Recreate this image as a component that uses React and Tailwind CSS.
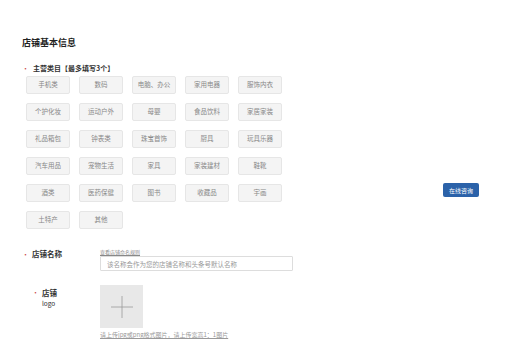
import React from 'react';

const categories = [
  '手机类', '数码', '电脑、办公', '家用电器', '服饰内衣',
  '个护化妆', '运动户外', '母婴', '食品饮料', '家居家装',
  '礼品箱包', '钟表类', '珠宝首饰', '厨具', '玩具乐器',
  '汽车用品', '宠物生活', '家具', '家装建材', '鞋靴',
  '酒类', '医药保健', '图书', '收藏品', '宇画',
  '土特产', '其他',
];

const font = { fontFamily: '"Noto Sans CJK SC", "Noto Sans", sans-serif' };

const App = () => {
  return (
    <div className="relative w-[527px] h-[363px] bg-white overflow-hidden text-[#333]" style={font}>
      <div className="pt-[37px] pl-[22px]">
        <h2 className="text-[9px] leading-[12px] font-bold text-[#222]">店铺基本信息</h2>

        {/* main category */}
        <div className="mt-[14px] flex items-center h-[10px]">
          <span className="w-[11px] text-[7px] text-[#c44]">•</span>
          <span className="text-[7px] font-bold text-[#333]">主营类目【最多填写3个】</span>
        </div>
        <div className="mt-[3px] ml-[4px] grid grid-cols-[repeat(5,44px)] gap-x-[9px] gap-y-[9px]">
          {categories.map((c) => (
            <button
              key={c}
              className="h-[18px] bg-[#f4f4f4] border border-[#e6e6e6] rounded-[2px] text-[6.5px] text-[#888] flex items-center justify-center"
            >
              {c}
            </button>
          ))}
        </div>

        {/* store name */}
        <div className="mt-[19px] flex">
          <div className="w-[78px] flex items-start pt-[1px]">
            <span className="w-[10px] text-[7px] leading-[10px] text-[#c44]">•</span>
            <span className="text-[7.5px] leading-[10px] font-bold text-[#333]">店铺名称</span>
          </div>
          <div className="flex flex-col">
            <a className="text-[5px] leading-[7px] text-[#888] underline">查看店铺命名规则</a>
            <input
              className="mt-[1px] w-[193px] h-[15px] border border-[#ddd] rounded-[1px] px-[6px] text-[6.5px] outline-none placeholder:text-[#999]"
              placeholder="该名称会作为您的店铺名称和头条号默认名称"
            />
          </div>
        </div>

        {/* logo */}
        <div className="mt-[14px] flex">
          <div className="w-[78px] flex items-start pl-[10px] pt-[2px]">
            <span className="w-[10px] text-[7px] leading-[10px] text-[#c44]">•</span>
            <div className="flex flex-col text-[7.5px] leading-[11px] text-[#333]">
              <span className="font-bold">店铺</span>
              <span className="text-[6.5px]">logo</span>
            </div>
          </div>
          <div className="flex flex-col">
            <div className="w-[43px] h-[43px] bg-[#e8e8e8] flex items-center justify-center">
              <svg width="22" height="22" viewBox="0 0 22 22">
                <path d="M11 0V22M0 11H22" stroke="#9a9a9a" strokeWidth="0.8" />
              </svg>
            </div>
            <a className="mt-[2px] text-[6px] leading-[9px] text-[#999] underline">
              请上传jpg或png格式图片，请上传宽高1：1图片
            </a>
          </div>
        </div>
      </div>

      {/* floating consult button */}
      <button className="absolute left-[443px] top-[183px] w-[36px] h-[14px] bg-[#2b62a9] rounded-[2px] text-white text-[6px] flex items-center justify-center">
        在线咨询
      </button>
    </div>
  );
};

export default App;
